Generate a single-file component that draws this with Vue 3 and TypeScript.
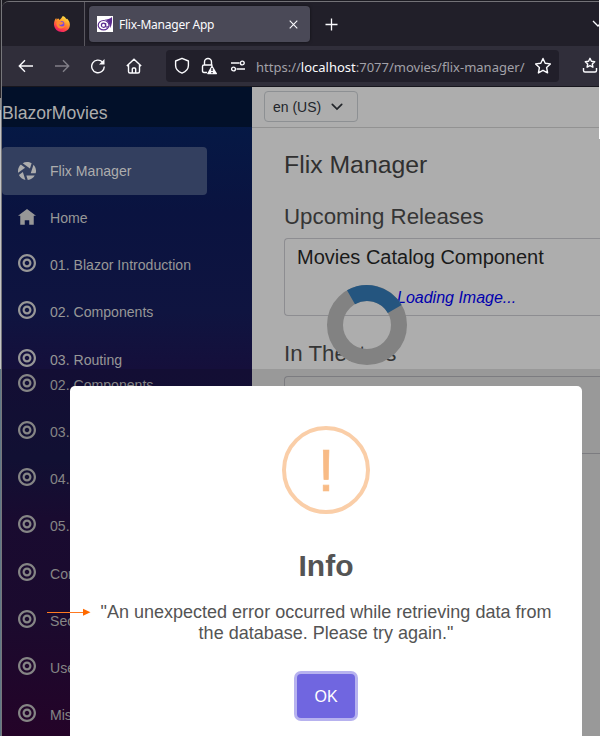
<script setup lang="ts">
type IconName = 'aperture' | 'home' | 'target'
interface NavItem {
  label: string
  icon: IconName
  active?: boolean
}

const icons: Record<IconName, string> = {
  aperture:
    'M4 0c-.69 0-1.34.19-1.91.5l3.22 2.34.75-2.25c-.6-.36-1.31-.59-2.06-.59zm-2.75 1.13c-.76.73-1.25 1.74-1.25 2.88 0 .25.02.48.06.72l3.09-2.22-1.91-1.38zm5.63.13l-1.22 3.75h2.19c.08-.32.16-.65.16-1 0-1.07-.44-2.03-1.13-2.75zm-4.72 3.22l-1.75 1.25c.55 1.13 1.6 1.99 2.88 2.22l-1.13-3.47zm1.56 1.53l.63 1.97c1.33-.12 2.46-.88 3.09-1.97h-3.72z',
  home: 'M4 0l-4 3h1v4h2v-2h2v2h2v-4.03l1 .03-4-3z',
  target:
    'M4 0c-2.2 0-4 1.8-4 4s1.8 4 4 4 4-1.8 4-4-1.8-4-4-4zm0 1c1.66 0 3 1.34 3 3s-1.34 3-3 3-3-1.34-3-3 1.34-3 3-3zm0 1c-1.1 0-2 .9-2 2s.9 2 2 2 2-.9 2-2-.9-2-2-2zm0 1c.56 0 1 .44 1 1s-.44 1-1 1-1-.44-1-1 .44-1 1-1z',
}

const upperNav: NavItem[] = [
  { label: 'Flix Manager', icon: 'aperture', active: true },
  { label: 'Home', icon: 'home' },
  { label: '01. Blazor Introduction', icon: 'target' },
  { label: '02. Components', icon: 'target' },
  { label: '03. Routing', icon: 'target' },
]

const lowerNav: NavItem[] = [
  { label: '02. Components', icon: 'target' },
  { label: '03.', icon: 'target' },
  { label: '04.', icon: 'target' },
  { label: '05.', icon: 'target' },
  { label: 'Com', icon: 'target' },
  { label: 'Sec', icon: 'target' },
  { label: 'User', icon: 'target' },
  { label: 'Misc', icon: 'target' },
]
</script>

<template>
  <div class="desktop">
    <div class="edge">
      <div class="edge-dark"></div>
      <div class="edge-light"></div>
      <div class="edge-slate"></div>
    </div>

    <div class="window">
      <div class="tabbar">
        <div class="pinned">
          <svg width="18" height="18" viewBox="0 0 18 18">
            <defs>
              <linearGradient id="fox" x1="0.8" y1="0" x2="0.3" y2="1">
                <stop offset="0" stop-color="#fff04a" />
                <stop offset="0.4" stop-color="#ff9a2a" />
                <stop offset="0.75" stop-color="#ff4248" />
                <stop offset="1" stop-color="#e8186c" />
              </linearGradient>
            </defs>
            <path d="M1 9.5C.9 7 1.700 4.500 3.200 3l.4 1.700C4.200 4 4.800 3.700 5.500 3.600L6.500 5C8 3.500 9 2.500 9.700 1c2 .5 3 2 3.600 3.200l.6-.7c1.700 1.500 3 3.500 3 6.200 0 4.200-3.500 7.300-7.900 7.300S1.200 14 1 9.500z" fill="url(#fox)" />
            <circle cx="8.400" cy="8.900" r="3" fill="#7b48e0" />
            <path d="M4.500 6.500c1.700-1 3-.6 4.300.6 1.200.2 1.700.6 1.700 1.100-.6 1-1.900.8-2.500 1.800-.8.300-1.600-.3-2.200-.9.300 2.300 3.500 3.500 6.300 1.400-1 3.500-5.600 4-7.500 1.500S3.300 7.800 4.500 6.500z" fill="#ff8a30" />
          </svg>
        </div>
        <div class="tab">
          <svg class="favicon" width="16" height="16" viewBox="0 0 16 16">
            <rect width="16" height="16" fill="#fff" />
            <path d="M7.500 3.800c3-.2 5.300-.9 7.500-2.800.3 3.500.2 8-2 11.200-.2-3.800-1.500-7-5.500-8.400z" fill="#5c2d91" />
            <ellipse cx="6.600" cy="9.200" rx="5.400" ry="4.700" fill="#fff" stroke="#5c2d91" stroke-width="1.200" />
            <circle cx="6.500" cy="9.200" r="2.100" fill="none" stroke="#5c2d91" stroke-width="1.200" />
            <path d="M8.700 6.900v3.200c.3 1.400 2 1.200 2.500 0" fill="none" stroke="#5c2d91" stroke-width="1.100" />
          </svg>
          <span class="tab-title">Flix-Manager App</span>
          <svg class="tab-close" width="9" height="9" viewBox="0 0 9 9"><path d="M.7.7l7.600 7.600M8.300.7L.7 8.300" stroke="#fbfbfe" stroke-width="1.100" /></svg>
        </div>
        <svg class="plus" width="13" height="13" viewBox="0 0 13 13"><path d="M6.500 .5v12M.5 6.500h12" stroke="#fbfbfe" stroke-width="1.300" /></svg>
        <svg class="all-tabs" width="12" height="8" viewBox="0 0 12 8"><path d="M1 1l5 5 5-5" fill="none" stroke="#fbfbfe" stroke-width="1.300" /></svg>
      </div>

      <div class="toolbar">
        <svg class="tool" width="16" height="16" viewBox="0 0 16 16"><path d="M15 8H1.500M7 2.300L1.300 8 7 13.700" /></svg>
        <svg class="tool dim" width="16" height="16" viewBox="0 0 16 16"><path d="M1 8h13.500M9 2.300L14.700 8 9 13.700" /></svg>
        <svg class="tool" width="16" height="16" viewBox="0 0 16 16"><path d="M14.300 8.500A6.300 6.300 0 1 1 12.500 4" /><path d="M14.500 1v5.500H9z" fill="#fbfbfe" stroke="none" /></svg>
        <svg class="tool" width="16" height="16" viewBox="0 0 16 16"><path d="M.8 8L8 1.200 15.200 8M2.500 7v6.500q0 1.500 1.500 1.500h8q1.500 0 1.500-1.500V7M6.300 15v-4q0-1 1-1h1.400q1 0 1 1v4" /></svg>
        <div class="urlbar">
          <svg class="tool shield" width="16" height="18" viewBox="0 0 16 18"><path d="M8 1.300L14.400 4v4.500c0 3.500-3.500 6.500-6.400 7.700-2.900-1.200-6.400-4.200-6.400-7.700V4z" stroke-linejoin="round" /></svg>
          <svg class="tool lock" width="17" height="18" viewBox="0 0 17 18">
            <path d="M3.500 8V5a3.500 3.500 0 0 1 7 0v3M6 15.500H3q-1.500 0-1.500-1.500V9.500Q1.500 8 3 8h7.500l1 .5" />
            <path d="M11 8l5 8.500q.3.800-.6.800H6.800q-.9 0-.6-.8z" fill="#fbfbfe" stroke="none" />
            <path d="M11 11v3M11 15v1.300" stroke="#211f2a" />
          </svg>
          <svg class="tool perms" width="16" height="12" viewBox="0 0 16 12"><path d="M1 3h8.500M6.500 9H15" /><circle cx="12.300" cy="3" r="1.900" /><circle cx="3.500" cy="9" r="1.900" /></svg>
          <span class="url">https://<b>localhost</b>:7077/movies/flix-manager/</span>
          <svg class="tool star" width="18" height="18" viewBox="0 0 18 18"><path d="M9 1.500l2.200 4.800 5.200.6-3.800 3.600 1 5.400L9 13.300l-4.600 2.600 1-5.400L1.600 6.900l5.200-.6z" stroke-linejoin="round" /></svg>
        </div>
        <svg class="tool shelf" width="16" height="17" viewBox="0 0 16 17"><path d="M8 1.300l1.400 3 3.300.4-2.400 2.300.6 3.200L8 8.700l-2.900 1.500.6-3.200-2.400-2.300 3.300-.4zM1.500 11v2.500q0 1.500 1.500 1.500h10q1.500 0 1.500-1.500V11" stroke-linejoin="round" /></svg>
      </div>

      <section class="page upper">
        <aside class="sidebar">
          <div class="brand">BlazorMovies</div>
          <nav>
            <a v-for="item in upperNav" :key="item.label" class="nav-link" :class="{ active: item.active }">
              <svg class="oi" :class="item.icon" width="18" height="18" viewBox="0 0 8 8"><path :d="icons[item.icon]" /></svg>
              <span>{{ item.label }}</span>
            </a>
          </nav>
        </aside>
        <main class="main">
          <div class="top-row">
            <div class="culture">
              <span>en (US)</span>
              <svg width="12" height="8" viewBox="0 0 12 8"><path d="M1.300 1.300L6 6l4.700-4.700" fill="none" stroke="#22252a" stroke-width="1.700" stroke-linecap="round" /></svg>
            </div>
          </div>
          <h3>Flix Manager</h3>
          <h4>Upcoming Releases</h4>
          <div class="catalog">
            <h5>Movies Catalog Component</h5>
            <em>Loading Image...</em>
          </div>
          <h4 class="theaters">In Theaters</h4>
        </main>
      </section>

      <section class="page lower">
        <aside class="sidebar">
          <nav>
            <a v-for="item in lowerNav" :key="item.label" class="nav-link">
              <svg class="oi" width="18" height="18" viewBox="0 0 8 8"><path :d="icons[item.icon]" /></svg>
              <span>{{ item.label }}</span>
            </a>
          </nav>
        </aside>
        <main class="main">
          <div class="catalog empty"></div>
        </main>
      </section>
    </div>

    <div class="right-edge"></div>

    <svg class="spinner" width="82" height="82" viewBox="0 0 82 82">
      <circle cx="41" cy="41" r="32" fill="none" stroke="#828282" stroke-width="16" />
      <path d="M25 13.300A32 32 0 0 1 68.700 25" fill="none" stroke="#24557f" stroke-width="16" />
    </svg>

    <div class="modal">
      <div class="warn-icon"><span>!</span></div>
      <h2>Info</h2>
      <p>"An unexpected error occurred while retrieving data from<br />the database. Please try again."</p>
      <button type="button">OK</button>
    </div>

    <svg class="pointer" width="44" height="8" viewBox="0 0 44 8">
      <path d="M0 4.500h37" stroke="#ff7a21" stroke-width="1" />
      <path d="M36 .8l7.500 3.500L36 7.800z" fill="#ff6a00" />
    </svg>
  </div>
</template>

<style>
body {
  margin: 0;
}
</style>

<style scoped>
* {
  box-sizing: border-box;
}
.desktop {
  position: relative;
  display: flex;
  width: 600px;
  height: 736px;
  overflow: hidden;
  background: #1c1b22;
  font-family: 'Liberation Sans', Arial, sans-serif;
}
.edge {
  display: flex;
  flex-direction: column;
  flex: 0 0 2px;
  border-right: 1px solid #77777b;
}
.edge-dark {
  height: 98px;
  background: #252329;
}
.edge-light {
  height: 271px;
  background: linear-gradient(180deg, #8f8f8f 0 12px, #c4c4c4 12px);
}
.edge-slate {
  flex: 1;
  background: #607785;
}
.window {
  flex: 1;
  min-width: 0;
  display: flex;
  flex-direction: column;
  margin-top: 1px;
  border-top: 1px solid #737277;
  border-top-left-radius: 7px;
  overflow: hidden;
}
.tabbar {
  display: flex;
  flex: none;
  height: 44px;
  background: #211f29;
}
.pinned {
  flex: 0 0 83px;
  display: flex;
  align-items: center;
  padding-left: 51px;
  border-right: 1px solid #59575f;
}
.tab {
  flex: 0 0 221px;
  height: 36px;
  margin: 4px 0 0 4px;
  padding: 0 12px 0 8px;
  display: flex;
  align-items: center;
  border-radius: 4px;
  background: #4a4957;
  box-shadow: 0 0 3px rgba(0, 0, 0, 0.55);
}
.tab-title {
  flex: 1;
  margin-left: 6px;
  color: #fbfbfe;
  font: 12px 'Noto Sans', sans-serif;
  letter-spacing: -0.24px;
  white-space: nowrap;
}
.plus {
  margin: 16px 0 0 15px;
}
.all-tabs {
  margin: 18px -4px 0 auto;
  flex: none;
}
.toolbar {
  display: flex;
  flex: none;
  align-items: center;
  height: 41px;
  padding-left: 16px;
  background: #302e3a;
  border-bottom: 1px solid #17161d;
}
.tool {
  flex: none;
  margin-right: 20px;
  fill: none;
  stroke: #fbfbfe;
  stroke-width: 1.4;
}
.dim {
  stroke: #817f88;
}
.urlbar {
  flex: 0 0 393px;
  display: flex;
  align-items: center;
  height: 32px;
  margin-left: 4px;
  padding-left: 8px;
  border-radius: 4px;
  background: #211f2a;
}
.shield {
  margin-right: 11px;
}
.lock {
  margin-right: 12px;
}
.perms {
  margin-right: 10px;
}
.url {
  flex: 0 0 278px;
  padding-top: 1px;
  color: #a2a1a8;
  font: 13px 'Noto Sans', sans-serif;
  white-space: nowrap;
}
.url b {
  color: #fbfbfe;
  font-weight: 400;
}
.star {
  margin: 0;
}
.shelf {
  margin: 0 0 2px 23px;
}
.page {
  display: flex;
  overflow: hidden;
}
.upper {
  height: 282px;
  flex: none;
}
.lower {
  flex: 1;
}
.sidebar {
  flex: 0 0 250px;
  color: #979797;
  background: linear-gradient(180deg, #031b47 0, #0a1340 125px, #0f1440 225px, #150f3b 282px);
}
.lower .sidebar {
  color: #858585;
  background: linear-gradient(180deg, #130e34 0, #111033 90px, #190b30 150px, #1b0a2e 250px, #240328 367px);
}
.brand {
  height: 40px;
  padding-top: 16px;
  background: #021029;
  color: #adadad;
  font-size: 17.6px;
  line-height: 21px;
}
.upper nav {
  padding-top: 20px;
}
.lower nav {
  margin-top: -8px;
}
.nav-link {
  display: flex;
  align-items: center;
  height: 47.25px;
  padding-left: 16px;
  font-size: 14.1px;
  line-height: 16px;
}
.nav-link.active {
  width: 205px;
  height: 48px;
  margin-bottom: -0.75px;
  border-radius: 4px;
  background: #333f5f;
  color: #adadad;
}
.oi {
  flex: none;
  margin: -4px 14px 0 0;
  fill: currentColor;
}
.oi.aperture {
  margin-top: 0;
}
.oi.home {
  margin-top: 1px;
}
.main {
  flex: 1;
  min-width: 0;
  background: #adadad;
}
.lower .main {
  background: #999999;
}
.top-row {
  height: 41px;
  padding: 4px 0 0 12px;
  border-bottom: 1px solid #929292;
}
.culture {
  display: flex;
  align-items: center;
  justify-content: space-between;
  width: 94px;
  height: 31px;
  padding: 0 14px 0 8px;
  border: 1px solid #8d9093;
  border-radius: 4px;
  color: #22252a;
  font-size: 14px;
}
h2,
h3,
h4,
h5,
p {
  margin: 0;
  font-weight: 400;
}
h3 {
  padding: 21px 0 0 32px;
  color: #303030;
  font-size: 24.8px;
  line-height: 31px;
}
h4 {
  padding: 23px 0 0 32px;
  color: #353535;
  font-size: 22.3px;
  line-height: 28px;
}
.catalog {
  display: flex;
  flex-direction: column;
  height: 78px;
  margin: 7px 0 0 32px;
  padding: 4px 0 0 12px;
  border: 1px solid #8d8d91;
  border-right: 0;
  border-radius: 4px 0 0 4px;
}
.catalog h5 {
  color: #1a1a1a;
  font-size: 20px;
  line-height: 28px;
}
.catalog em {
  margin: 17px 0 0 100px;
  color: #0000ad;
  font-size: 16px;
  line-height: 20px;
}
.catalog.empty {
  margin-top: 7px;
  border-color: #7c7c80;
}
.theaters {
  padding-top: 24px;
}
.right-edge {
  position: absolute;
  top: 0;
  right: 0;
  width: 1px;
  height: 139px;
  background: #fff;
}
.spinner {
  position: absolute;
  left: 326px;
  top: 284px;
}
.modal {
  position: absolute;
  left: 70px;
  top: 386px;
  width: 512px;
  height: 350px;
  padding-top: 40px;
  display: flex;
  flex-direction: column;
  align-items: center;
  border-radius: 5px 5px 0 0;
  background: #fff;
  color: #545454;
  text-align: center;
}
.warn-icon {
  display: flex;
  align-items: center;
  justify-content: center;
  width: 88px;
  height: 88px;
  border: 4px solid #facea8;
  border-radius: 50%;
  color: #f8bb86;
  font-size: 60px;
  line-height: 80px;
}
.warn-icon span {
  padding-top: 2px;
  -webkit-text-stroke: 0.6px #f8bb86;
}
.modal h2 {
  margin-top: 34px;
  font-size: 30px;
  font-weight: 700;
  line-height: 36px;
}
.modal p {
  margin-top: 18px;
  font-size: 18.03px;
  line-height: 21px;
  white-space: nowrap;
}
.modal button {
  width: 58px;
  height: 44px;
  margin-top: 30px;
  padding: 1px 0 0;
  border: 0;
  border-radius: 4px;
  background: #7066e0;
  box-shadow: 0 0 0 3px #b7b2ef;
  color: #fff;
  font: 16px 'Liberation Sans', Arial, sans-serif;
}
.pointer {
  position: absolute;
  left: 47px;
  top: 608px;
}
</style>
